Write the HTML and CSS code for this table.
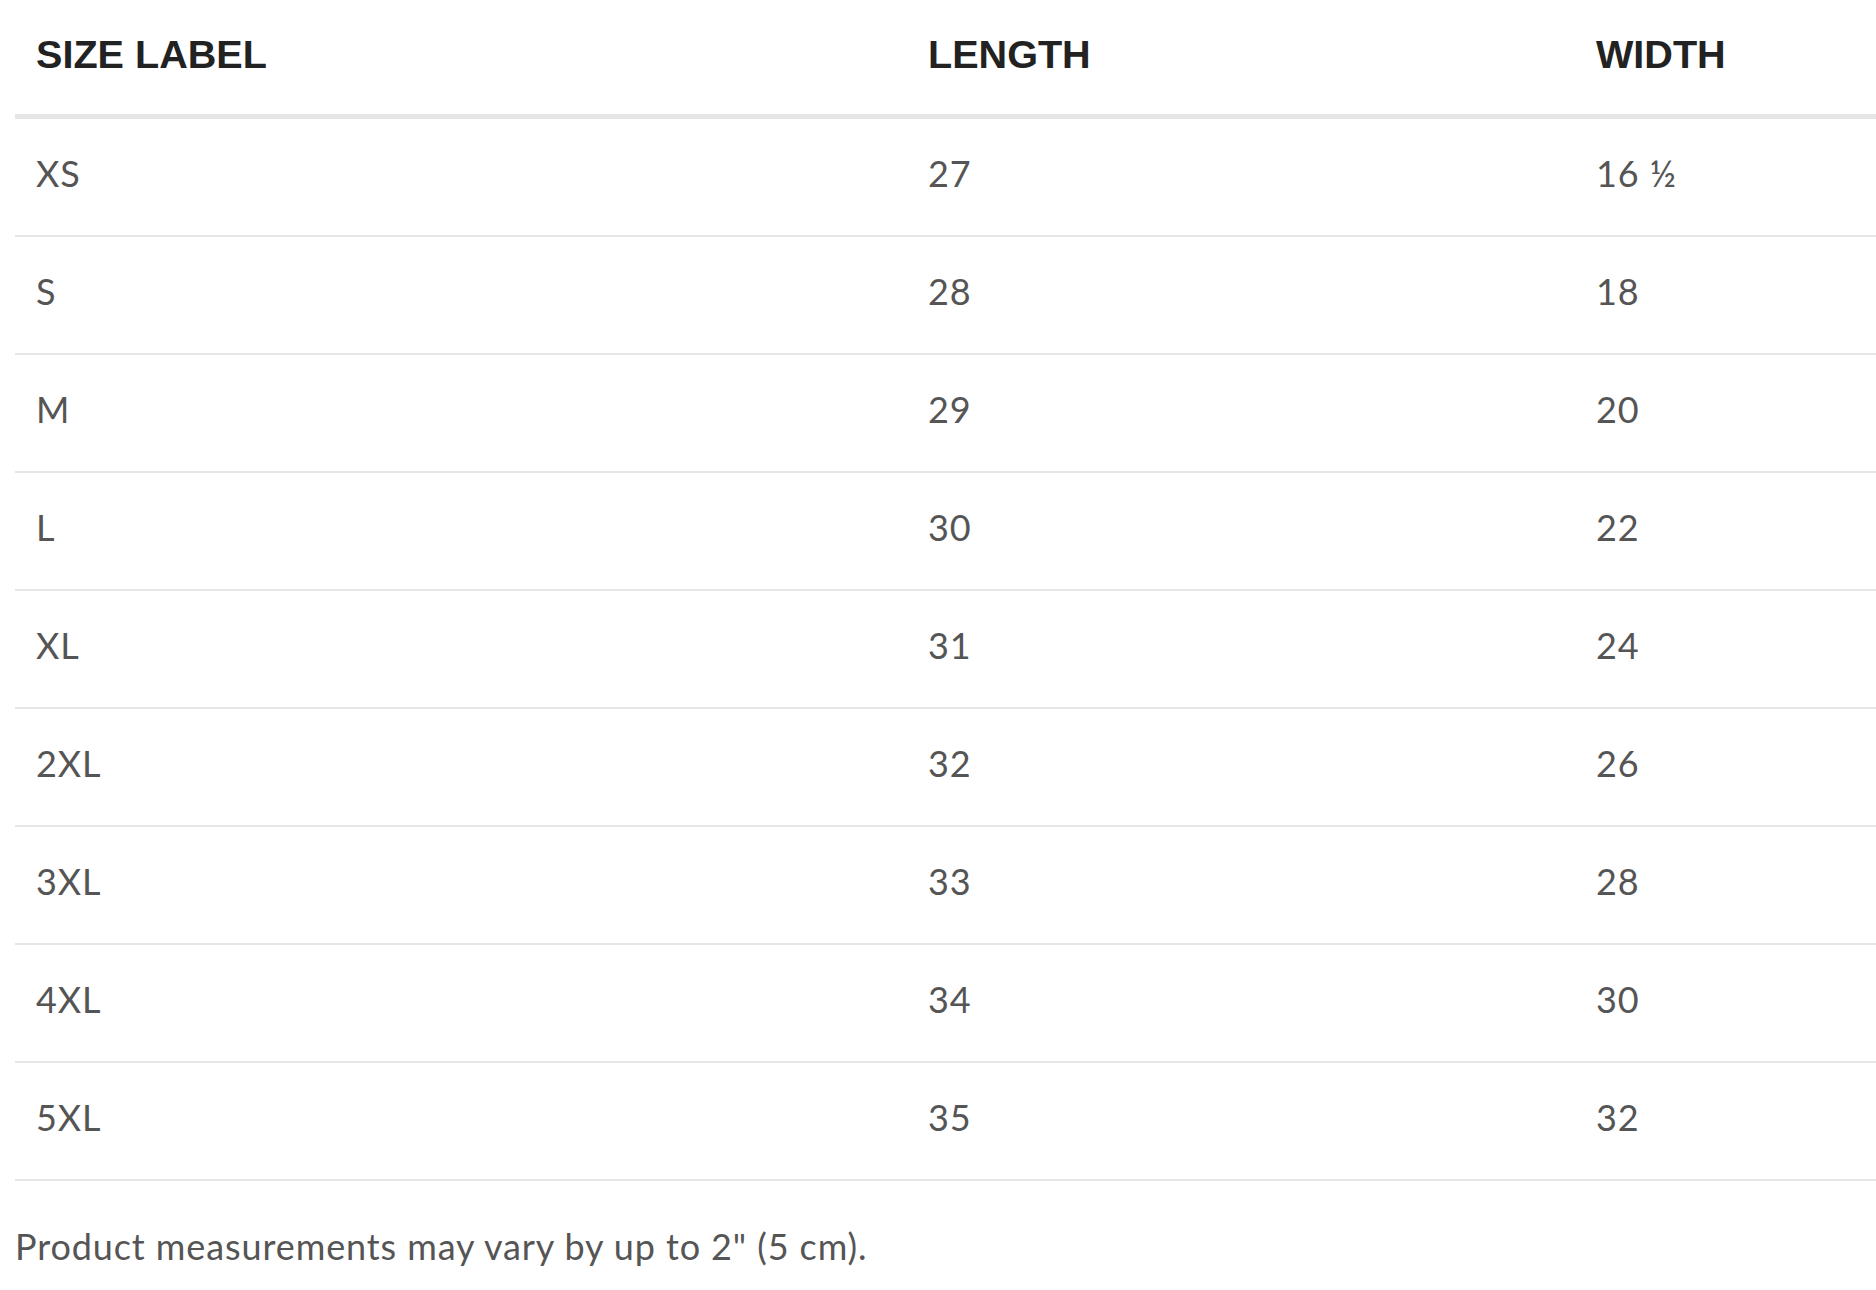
FILE: index.html
```html
<!DOCTYPE html>
<html lang="en">
<head>
<meta charset="utf-8">
<title>Size guide</title>
<link rel="stylesheet" href="styles.css">
</head>
<body>
<div class="guide">
  <table class="size-table">
    <colgroup>
      <col class="col-size">
      <col class="col-length">
      <col class="col-width">
    </colgroup>
    <thead>
      <tr><th>SIZE LABEL</th><th>LENGTH</th><th>WIDTH</th></tr>
    </thead>
    <tbody>
      <tr><td>XS</td><td>27</td><td>16 ½</td></tr>
      <tr><td>S</td><td>28</td><td>18</td></tr>
      <tr><td>M</td><td>29</td><td>20</td></tr>
      <tr><td>L</td><td>30</td><td>22</td></tr>
      <tr><td>XL</td><td>31</td><td>24</td></tr>
      <tr><td>2XL</td><td>32</td><td>26</td></tr>
      <tr><td>3XL</td><td>33</td><td>28</td></tr>
      <tr><td>4XL</td><td>34</td><td>30</td></tr>
      <tr><td>5XL</td><td>35</td><td>32</td></tr>
    </tbody>
  </table>
  <p class="note">Product measurements may vary by up to 2" (5 cm).</p>
</div>
</body>
</html>
```
FILE: styles.css
```css
html, body {
  margin: 0;
  padding: 0;
  background: #ffffff;
  overflow: hidden;
}

.guide {
  padding-left: 15px;
  font-family: Lato, "Liberation Sans", sans-serif;
  color: #555555;
}

.size-table {
  width: 1861px;
  border-collapse: collapse;
  table-layout: fixed;
}

.col-size { width: 892px; }
.col-length { width: 668px; }
.col-width { width: 301px; }

.size-table th {
  padding: 29px 21px 35px;
  line-height: 50px;
  text-align: left;
  vertical-align: middle;
  font-family: "Liberation Sans", Arial, sans-serif;
  font-weight: 700;
  font-size: 39.6px;
  color: #222222;
  border-bottom: 5px solid #e6e6e6;
}

.size-table td {
  padding: 29px 21px 37px;
  line-height: 50px;
  vertical-align: middle;
  font-size: 36px;
  letter-spacing: 0.025em;
  font-weight: 400;
  color: #555555;
  border-bottom: 2px solid #e6e6e6;
}

.note {
  margin: 44px 0 0 0;
  font-size: 36px;
  letter-spacing: 0.025em;
  line-height: 1.2;
  color: #555555;
}
```
